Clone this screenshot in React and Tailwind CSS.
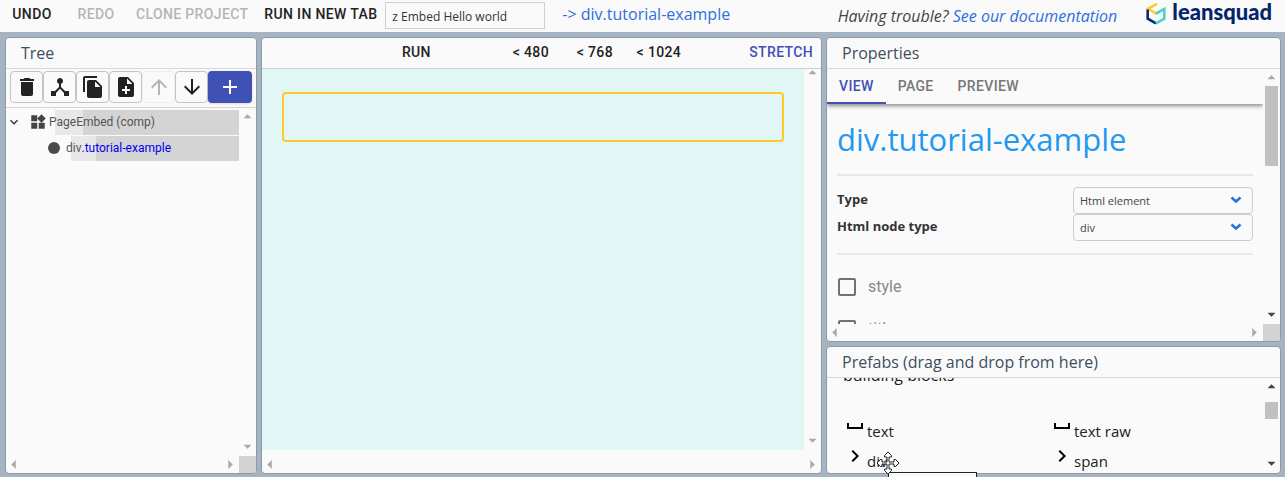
import {
  MdAdd, MdArrowDownward, MdArrowUpward, MdChevronRight, MdDelete, MdDeviceHub,
  MdExpandMore, MdFileCopy, MdNoteAdd, MdSpaceBar, MdWidgets,
} from "react-icons/md";

const sans = "font-['Open_Sans','Noto_Sans',sans-serif]";
const roboto = "font-[Roboto,sans-serif]";

function Arrow({ dir, dark }) {
  const points = {
    up: "5,10 12,10 8.5,6.5",
    down: "5,6 12,6 8.5,9.5",
    left: "5.5,8.5 9.5,4.5 9.5,12.5",
    right: "10.5,8.5 6.5,4.5 6.5,12.5",
  }[dir];
  return (
    <svg viewBox="0 0 17 17" className={`size-[17px] shrink-0 ${dark ? "text-[#444]" : "text-[#aaa]"}`} aria-hidden="true">
      <polygon points={points} fill="currentColor" stroke="currentColor" strokeWidth=".5" />
    </svg>
  );
}

function VScroll({ upDark, downDark, className = "", children }) {
  return (
    <div className={`flex w-[17px] shrink-0 flex-col justify-between ${className}`}>
      <Arrow dir="up" dark={upDark} />
      <div className="min-h-0 flex-1">{children}</div>
      <Arrow dir="down" dark={downDark} />
    </div>
  );
}

function HScroll({ corner }) {
  return (
    <div className="flex h-[17px] shrink-0">
      <div className="flex flex-1 justify-between">
        <Arrow dir="left" />
        <Arrow dir="right" />
      </div>
      {corner && <div className="w-[17px] bg-[#d3d3d3]" />}
    </div>
  );
}

function Panel({ title, className = "", children }) {
  return (
    <section className={`flex min-h-0 min-w-0 flex-col overflow-hidden rounded border border-[#8d9ba8] bg-[#fafafa] ${className}`}>
      {title && (
        <h2 className={`${sans} flex h-[31px] shrink-0 items-center border-b border-[#d8d8dc] px-[15px] text-base leading-6 font-medium text-[#3f4e5c]`}>
          {title}
        </h2>
      )}
      {children}
    </section>
  );
}

function TextButton({ children, disabled, className = "text-[#222]" }) {
  return (
    <button disabled={disabled} className={`${roboto} min-w-16 px-2 text-sm leading-6 font-medium tracking-wide whitespace-nowrap uppercase ${disabled ? "text-[#b5b5b5]" : className}`}>
      {children}
    </button>
  );
}

function IconButton({ label, icon: Icon, disabled }) {
  return (
    <button aria-label={label} disabled={disabled} className={`flex h-8 w-[33px] items-center justify-center rounded border ${disabled ? "border-[#eee] text-[#b5b5b5]" : "border-[#c4c4c4] text-[#222]"}`}>
      <Icon className="size-6" />
    </button>
  );
}

function SelectRow({ id, label, options }) {
  return (
    <div className="flex h-[27px] justify-between">
      <label htmlFor={id} className="text-[13px] leading-6 font-bold text-[#333]">{label}</label>
      <div className="relative">
        <select id={id} className="h-[27px] w-[180px] appearance-none rounded border border-[#ccc] bg-[#fafafa] px-[6px] pt-[2px] text-[11px] text-[#444]">
          {options.map((o) => <option key={o}>{o}</option>)}
        </select>
        <svg viewBox="0 0 12 8" className="pointer-events-none absolute top-[9px] right-[11px] h-2 w-3 text-[#2a6fe0]" aria-hidden="true">
          <path d="M1.5 1.5 6 5.5l4.500-4" fill="none" stroke="currentColor" strokeWidth="2.500" />
        </svg>
      </div>
    </div>
  );
}

function CheckRow({ label }) {
  return (
    <label className={`${roboto} flex h-[42px] items-center gap-3 text-base text-[#888]`}>
      <input type="checkbox" className="ml-px size-[18px] appearance-none rounded-xs border-2 border-[#717171]" />
      {label}
    </label>
  );
}

function Prefab({ icon: Icon, children }) {
  return (
    <div className="flex h-[30px] items-center">
      <Icon className="-mt-[10px] size-6 shrink-0 text-black" />
      {children}
    </div>
  );
}

function Logo() {
  return (
    <a href="#home" className="flex items-center gap-[6px] pb-[5px]">
      <svg viewBox="0 0 20 23" className="h-[23px] w-5" fill="none" strokeWidth="2.600" aria-hidden="true">
        <path d="M11 1.800 2 6.700 10 11.500 12.500 10.200" stroke="#fccf2f" />
        <path d="M1.700 7.500v9.200l8.300 4.700" stroke="#0a2a70" />
        <path d="M10 21.400l8.300-4.700V7L10 11.700" stroke="#4fd3c8" />
      </svg>
      <span className="pb-[3px] font-[Lato,sans-serif] text-[22px] leading-6 font-black text-[#04256c]">leansquad</span>
    </a>
  );
}

export default function App() {
  return (
    <div className={`${sans} relative flex h-screen flex-col overflow-hidden bg-[#a6b4c1] text-[#222]`}>
      <header className="flex h-8 shrink-0 items-center justify-between bg-[#fafafa] pr-[13px]">
        <div className="flex items-center pb-1">
          <TextButton>Undo</TextButton>
          <TextButton disabled>Redo</TextButton>
          <TextButton disabled>Clone project</TextButton>
          <TextButton>Run in new tab</TextButton>
          <input aria-label="Project name" defaultValue="z Embed Hello world" className="mt-[2px] h-[27px] w-40 border border-[#d0d0d0] bg-[#fafafa] px-[6px] pt-[2px] text-xs text-[#333]" />
          <a href="#selected" className="ml-[17px] text-base leading-6 whitespace-nowrap text-[#2f6fdc]">-&gt; div.tutorial-example</a>
        </div>
        <div className="flex items-center gap-[29px]">
          <p className="text-base leading-6 whitespace-nowrap text-[#444] italic">
            Having trouble? <a href="#docs" className="text-[#2f6fdc]">See our documentation</a>
          </p>
          <Logo />
        </div>
      </header>

      <main className="grid min-h-0 flex-1 grid-cols-[252px_minmax(0,1fr)_455px] gap-1 pt-[5px] pr-1 pb-[3px] pl-[5px]">
        <Panel title="Tree">
          <div className="flex h-[39px] shrink-0 items-start border-b border-[#ddd0d4] pt-[2px] pl-1">
            <IconButton label="Delete" icon={MdDelete} />
            <IconButton label="Wrap" icon={MdDeviceHub} />
            <IconButton label="Duplicate" icon={MdFileCopy} />
            <IconButton label="Add page" icon={MdNoteAdd} />
            <IconButton label="Move up" icon={MdArrowUpward} disabled />
            <IconButton label="Move down" icon={MdArrowDownward} />
            <button aria-label="Add" className="flex h-8 w-11 items-center justify-center rounded bg-[#3f51b5] text-white shadow">
              <MdAdd className="size-6" />
            </button>
          </div>
          <div className="flex min-h-0 flex-1">
            <ul className={`${roboto} flex flex-1 flex-col gap-px pt-[2px] text-xs text-[#555]`}>
              <li className="flex h-[25px] items-center bg-[linear-gradient(90deg,transparent_49px,#e8e8e8_49px,#e8e8e8_77px,#d4d4d4_77px)] pb-[2px]">
                <MdExpandMore className="size-4 text-[#333]" />
                <MdWidgets className="mr-[2px] ml-[7px] size-[18px] text-[#444]" />
                PageEmbed (comp)
              </li>
              <li className="flex h-[25px] items-center bg-[linear-gradient(90deg,transparent_65px,#e8e8e8_65px,#e8e8e8_90px,#d4d4d4_90px)] pb-[2px] pl-[42px]">
                <span className="mr-[6px] size-3 rounded-full bg-[#4a4a4a]" />
                div<span className="text-[#0000f0]">.tutorial-example</span>
              </li>
            </ul>
            <VScroll />
          </div>
          <HScroll corner />
        </Panel>

        <Panel>
          <div className="flex h-[31px] shrink-0 items-center justify-between border-b border-[#c5d3d3] pb-[3px]">
            <span className="w-[72px]" />
            <TextButton>Run</TextButton>
            <div className="flex">
              <TextButton>&lt; 480</TextButton>
              <TextButton>&lt; 768</TextButton>
              <TextButton>&lt; 1024</TextButton>
            </div>
            <TextButton className="text-[#3f51b5]">Stretch</TextButton>
          </div>
          <div className="flex min-h-0 flex-1 pb-[6px]">
            <div className="flex-1 bg-[#e2f6f5] px-5 pt-[23px]">
              <div className="h-[50px] rounded border-2 border-[#ffc928]" />
            </div>
            <VScroll className="-mt-[5px]" />
          </div>
          <HScroll />
        </Panel>

        <div className="flex min-h-0 min-w-0 flex-col gap-1">
          <Panel title="Properties" className="flex-1">
            <div className="flex min-h-0 flex-1">
              <div className="min-w-0 flex-1 overflow-hidden">
                <div role="tablist" className={`${roboto} flex h-[35px] text-sm font-medium tracking-wide text-[#777] shadow-[0_2px_4px_rgba(0,0,0,0.45)]`}>
                  <button role="tab" aria-selected="true" className="border-b-2 border-[#3f51b5] px-3 text-[#3f51b5]">VIEW</button>
                  <button role="tab" className="border-b-2 border-transparent px-3">PAGE</button>
                  <button role="tab" className="border-b-2 border-transparent px-3">PREVIEW</button>
                </div>
                <div className="px-[10px]">
                  <h1 className="flex h-[70px] items-center text-[31px] text-[#2299ee]">div.tutorial-example</h1>
                  <hr className="border-t-2 border-[#e8e8e8]" />
                  <div className="pt-[11px] pb-3">
                    <SelectRow id="type" label="Type" options={["Html element"]} />
                    <SelectRow id="node" label="Html node type" options={["div"]} />
                  </div>
                  <hr className="border-t-2 border-[#e8e8e8]" />
                  <div className="pt-[11px]">
                    <CheckRow label="style" />
                    <CheckRow label="title" />
                  </div>
                </div>
              </div>
              <VScroll downDark>
                <div className="mx-[2px] h-20 bg-[#c1c1c1]" />
              </VScroll>
            </div>
            <HScroll corner />
          </Panel>

          <Panel title="Prefabs (drag and drop from here)" className="h-[128px] shrink-0">
            <div className="flex min-h-0 flex-1">
              <div className="min-w-0 flex-1 overflow-hidden pr-[6px] pl-4 text-[15px]">
                <h3 className="-mt-[13px] text-base leading-5">building blocks</h3>
                <div className="mt-[31px] grid grid-cols-2">
                  <Prefab icon={MdSpaceBar}>text</Prefab>
                  <Prefab icon={MdSpaceBar}>text raw</Prefab>
                  <Prefab icon={MdChevronRight}>div</Prefab>
                  <Prefab icon={MdChevronRight}>span</Prefab>
                </div>
              </div>
              <VScroll upDark downDark>
                <div className="mx-[2px] mt-[7px] h-[17px] bg-[#c1c1c1]" />
              </VScroll>
            </div>
          </Panel>
        </div>
      </main>

      <div className="absolute right-[308px] -bottom-4 h-[21px] w-[89px] border border-[#222] bg-[#fafafa]" />
      <svg viewBox="0 0 24 24" className="absolute right-[385px] bottom-[2px] size-6" aria-hidden="true">
        <path d="M12 1 8.500 4.500V6h2.500v5H6V8.500H4.500L1 12l3.500 3.500H6V13h5v5H8.500v1.500L12 23l3.500-3.500V18H13v-5h5v2.500h1.500L23 12l-3.500-3.500H18V11h-5V6h2.500V4.500z" fill="#fff" stroke="#222" />
      </svg>
    </div>
  );
}
